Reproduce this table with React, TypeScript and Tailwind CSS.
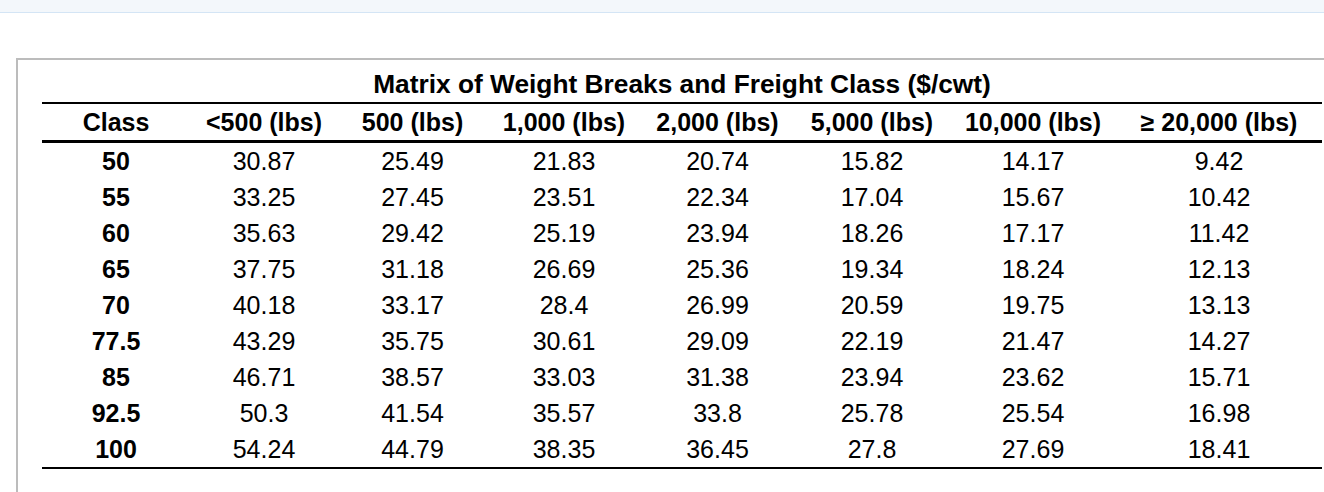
import React from "react";

const headers = ["Class", "<500 (lbs)", "500 (lbs)", "1,000 (lbs)", "2,000 (lbs)", "5,000 (lbs)", "10,000 (lbs)", "\u2265 20,000 (lbs)"];

const rows: string[][] = [
  ["50", "30.87", "25.49", "21.83", "20.74", "15.82", "14.17", "9.42"],
  ["55", "33.25", "27.45", "23.51", "22.34", "17.04", "15.67", "10.42"],
  ["60", "35.63", "29.42", "25.19", "23.94", "18.26", "17.17", "11.42"],
  ["65", "37.75", "31.18", "26.69", "25.36", "19.34", "18.24", "12.13"],
  ["70", "40.18", "33.17", "28.4", "26.99", "20.59", "19.75", "13.13"],
  ["77.5", "43.29", "35.75", "30.61", "29.09", "22.19", "21.47", "14.27"],
  ["85", "46.71", "38.57", "33.03", "31.38", "23.94", "23.62", "15.71"],
  ["92.5", "50.3", "41.54", "35.57", "33.8", "25.78", "25.54", "16.98"],
  ["100", "54.24", "44.79", "38.35", "36.45", "27.8", "27.69", "18.41"],
];

const cols = "grid grid-cols-[148px_148px_149px_154px_153px_156px_166px_206px]";

export default function App() {
  return (
    <div
      className="w-full h-[492px] overflow-hidden bg-white text-black"
      style={{ fontFamily: '"Liberation Sans", Arial, Helvetica, sans-serif' }}
    >
      <div className="h-[13px] bg-[#f3f7fb] border-b border-[#d4e5f5]" />
      <div className="ml-[16px] mt-[45px] w-[1340px] h-[480px] border-l-2 border-t-2 border-[#bcbcbc] pl-[24px]">
        <div className="w-[1280px]">
          <div className="pt-[9px] pb-[3px] h-[42px] text-center font-bold text-[26.3px] leading-[30px] whitespace-nowrap">
            Matrix of Weight Breaks and Freight Class ($/cwt)
          </div>
          <div className={`${cols} border-t-2 border-b-[3px] border-black h-[41px] text-[25px] leading-[36px] font-bold`}>
            {headers.map((h, i) => (
              <div key={i} className="text-center whitespace-nowrap">
                {h}
              </div>
            ))}
          </div>
          <div className="border-b-2 border-black">
            {rows.map((r, ri) => (
              <div key={ri} className={`${cols} h-[36px] text-[25px] leading-[36px]`}>
                {r.map((c, ci) => (
                  <div key={ci} className={`text-center whitespace-nowrap ${ci === 0 ? "font-bold" : ""}`}>
                    {c}
                  </div>
                ))}
              </div>
            ))}
          </div>
        </div>
      </div>
    </div>
  );
}
